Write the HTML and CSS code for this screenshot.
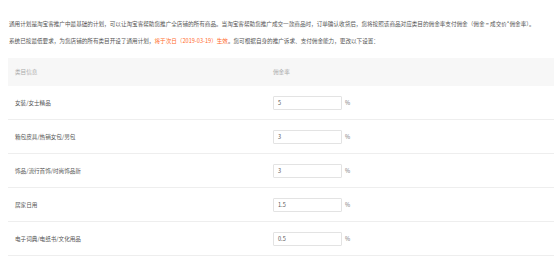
FILE: index.html
```html
<!DOCTYPE html>
<html lang="zh-CN">
<head>
<meta charset="utf-8">
<link rel="stylesheet" href="styles.css">
</head>
<body>
<div class="page">
  <p class="intro">通用计划是淘宝客推广中最基础的计划，可以让淘宝客帮助您推广全店铺的所有商品。当淘宝客帮助您推广成交一款商品时，订单确认收货后，您将按照该商品对应类目的佣金率支付佣金（佣金 = 成交价*佣金率）。</p>
  <p class="intro">系统已按最低要求，为您店铺的所有类目开设了通用计划，<span class="hl">将于次日（2019-03-19）生效</span>。您可根据自身的推广诉求、支付佣金能力，更改以下设置：</p>
  <div class="table">
    <div class="row head">
      <div class="cell c1">类目信息</div>
      <div class="cell c2">佣金率</div>
    </div>
    <div class="row">
      <div class="cell c1">女装/女士精品</div>
      <div class="cell c2"><span class="input">5</span><span class="pct">%</span></div>
    </div>
    <div class="row">
      <div class="cell c1">箱包皮具/热销女包/男包</div>
      <div class="cell c2"><span class="input">3</span><span class="pct">%</span></div>
    </div>
    <div class="row">
      <div class="cell c1">饰品/流行首饰/时尚饰品新</div>
      <div class="cell c2"><span class="input">3</span><span class="pct">%</span></div>
    </div>
    <div class="row">
      <div class="cell c1">居家日用</div>
      <div class="cell c2"><span class="input">1.5</span><span class="pct">%</span></div>
    </div>
    <div class="row">
      <div class="cell c1">电子词典/电纸书/文化用品</div>
      <div class="cell c2"><span class="input">0.5</span><span class="pct">%</span></div>
    </div>
  </div>
</div>
</body>
</html>
```
FILE: styles.css
```css
html, body {
  margin: 0;
  padding: 0;
  background: #fff;
}
body {
  font-family: "Noto Sans CJK SC", "Noto Sans", sans-serif;
  font-size: 5.6px;
  color: #555;
  overflow: hidden;
}
.page {
  padding: 19px 0 0 8px;
}
.intro {
  margin: 0 0 0 1px;
  height: 17px;
  line-height: 11px;
  white-space: nowrap;
}
.hl {
  color: #ff6a2b;
}
.table {
  margin-top: 5px;
}
.row {
  display: flex;
  align-items: center;
  height: 33px;
  border-bottom: 1px solid #eee;
}
.row.head {
  height: 28px;
  background: #f7f7f7;
  border-bottom: none;
  color: #aaa;
}
.cell {
  padding-left: 7px;
}
.c1 {
  width: 251px;
}
.c2 {
  display: flex;
  align-items: center;
}
.input {
  box-sizing: border-box;
  width: 69px;
  height: 14px;
  border: 1px solid #e3e3e3;
  border-radius: 1px;
  padding-left: 4px;
  display: flex;
  align-items: center;
  color: #555;
}
.pct {
  margin-left: 3px;
  color: #777;
}
```
